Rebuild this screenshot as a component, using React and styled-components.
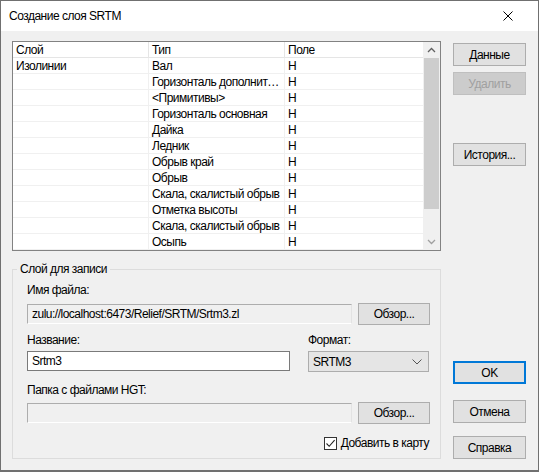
import React from "react";
import styled, { createGlobalStyle } from "styled-components";

const Global = createGlobalStyle`
  html, body {
    margin: 0;
    padding: 0;
    background: #4b5a2c;
  }
  * {
    box-sizing: border-box;
  }
`;

const rows = [
  ["Изолинии", "Вал", "H"],
  ["", "Горизонталь дополнительная", "H"],
  ["", "<Примитивы>", "H"],
  ["", "Горизонталь основная", "H"],
  ["", "Дайка", "H"],
  ["", "Ледник", "H"],
  ["", "Обрыв край", "H"],
  ["", "Обрыв", "H"],
  ["", "Скала, скалистый обрыв", "H"],
  ["", "Отметка высоты", "H"],
  ["", "Скала, скалистый обрыв", "H"],
  ["", "Осыпь", "H"],
];

const App = () => {
  return (
    <Window>
      <Global />
      <TitleBar>
        <span>Создание слоя SRTM</span>
        <CloseIcon viewBox="0 0 10 10">
          <path d="M0.5 0.5 L9.5 9.5 M9.5 0.5 L0.5 9.5" stroke="#000" strokeWidth="1" />
        </CloseIcon>
      </TitleBar>

      <Body>
        <LeftColumn>
          <ListView>
            <Grid>
              <HeaderRow>
                <HeadCell>Слой</HeadCell>
                <HeadCell>Тип</HeadCell>
                <HeadCell>Поле</HeadCell>
              </HeaderRow>
              {rows.map((r, i) => (
                <Row key={i}>
                  <Cell>{r[0]}</Cell>
                  <Cell>{r[1]}</Cell>
                  <Cell>{r[2]}</Cell>
                </Row>
              ))}
            </Grid>
            <ScrollBar>
              <Arrow>
                <svg width="9" height="6" viewBox="0 0 9 6">
                  <path d="M1 5 L4.5 1.5 L8 5" fill="none" stroke="#606060" strokeWidth="1.3" />
                </svg>
              </Arrow>
              <Track>
                <Thumb />
              </Track>
              <Arrow>
                <svg width="9" height="6" viewBox="0 0 9 6">
                  <path d="M1 1 L4.5 4.5 L8 1" fill="none" stroke="#a0a0a0" strokeWidth="1.3" />
                </svg>
              </Arrow>
            </ScrollBar>
          </ListView>

          <Group>
            <legend>Слой для записи</legend>
            <Label>Имя файла:</Label>
            <FieldRow $after={8}>
              <TextBox $readOnly $width={325}>zulu://localhost:6473/Relief/SRTM/Srtm3.zl</TextBox>
              <Button $width={72} $height={22}>Обзор...</Button>
            </FieldRow>

            <SplitRow>
              <FieldColumn $width={263}>
                <Label $after={4}>Название:</Label>
                <TextBox $width={263}>Srtm3</TextBox>
              </FieldColumn>
              <FieldColumn $width={121}>
                <Label $after={4}>Формат:</Label>
                <Select>
                  <span>SRTM3</span>
                  <svg width="10" height="6" viewBox="0 0 10 6">
                    <path d="M0.5 0.5 L5 5 L9.5 0.5" fill="none" stroke="#555" strokeWidth="1" />
                  </svg>
                </Select>
              </FieldColumn>
            </SplitRow>

            <Label $after={5}>Папка с файлами HGT:</Label>
            <FieldRow $after={12}>
              <TextBox $readOnly $width={325} />
              <Button $width={72} $height={22}>Обзор...</Button>
            </FieldRow>

            <CheckRow>
              <CheckBox>
                <svg width="11" height="11" viewBox="0 0 11 11">
                  <path d="M1.5 5.5 L4.2 8.3 L9.6 2.2" fill="none" stroke="#222" strokeWidth="1.1" />
                </svg>
              </CheckBox>
              <span>Добавить в карту</span>
            </CheckRow>
          </Group>
        </LeftColumn>

        <RightColumn>
          <Button $width={73}>Данные</Button>
          <Button $width={73} $disabled $top={6}>Удалить</Button>
          <Button $width={73} $top={48}>История...</Button>
          <Button $width={73} $default $top={195}>OK</Button>
          <Button $width={73} $top={16}>Отмена</Button>
          <Button $width={73} $top={13}>Справка</Button>
        </RightColumn>
      </Body>
    </Window>
  );
};

export default App;

const Window = styled.div`
  width: 539px;
  height: 472px;
  border: 1px solid #707070;
  border-bottom-width: 2px;
  background: #f0f0f0;
  font-family: "Liberation Sans", Arial, sans-serif;
  font-size: 12px;
  letter-spacing: -0.5px;
  color: #000;
  display: flex;
  flex-direction: column;
  overflow: hidden;
`;

const TitleBar = styled.div`
  height: 30px;
  background: #fff;
  display: flex;
  align-items: center;
  justify-content: space-between;
  padding: 0 25px 0 8px;
  font-size: 12px;
  flex-shrink: 0;
`;

const CloseIcon = styled.svg`
  width: 10px;
  height: 10px;
`;

const Body = styled.div`
  flex: 1;
  display: flex;
  padding: 10px 0 0 11px;
  gap: 12px;
`;

const LeftColumn = styled.div`
  width: 429px;
  display: flex;
  flex-direction: column;
`;

const RightColumn = styled.div`
  display: flex;
  flex-direction: column;
  padding-top: 2px;
`;

const ListView = styled.div`
  height: 210px;
  border: 1px solid #828282;
  background: #fff;
  display: flex;
`;

const Grid = styled.div`
  flex: 1;
  display: flex;
  flex-direction: column;
  overflow: hidden;
`;

const HeaderRow = styled.div`
  display: grid;
  grid-template-columns: 136px 136px 1fr;
  height: 16px;
  border-bottom: 1px solid #e5e5e5;
`;

const HeadCell = styled.div`
  padding: 1px 0 0 3px;
  line-height: 14px;
  border-right: 1px solid #e5e5e5;
  &:last-child {
    border-right: none;
  }
`;

const Row = styled.div`
  display: grid;
  grid-template-columns: 136px 136px 1fr;
  height: 16px;
  border-bottom: 1px solid #f0f0f0;
`;

const Cell = styled.div`
  padding: 1px 1px 0 3px;
  line-height: 14px;
  white-space: nowrap;
  overflow: hidden;
  text-overflow: ellipsis;
  border-right: 1px solid #f0f0f0;
  &:last-child {
    border-right: none;
  }
`;

const ScrollBar = styled.div`
  width: 17px;
  background: #f0f0f0;
  display: flex;
  flex-direction: column;
`;

const Arrow = styled.div`
  height: 16px;
  display: flex;
  align-items: center;
  justify-content: center;
`;

const Track = styled.div`
  flex: 1;
  padding: 0 1px;
`;

const Thumb = styled.div`
  height: 151px;
  background: #cdcdcd;
`;

const Group = styled.fieldset`
  margin: 11px 0 0 0;
  padding: 7px 9px 0 14px;
  height: 197px;
  border: 1px solid #dcdcdc;
  border-radius: 0;
  display: flex;
  flex-direction: column;

  legend {
    padding: 0 3px;
    margin-left: -10px;
    font-size: 12px;
  }
`;

const Label = styled.div`
  line-height: 14px;
  margin-bottom: ${(p) => (p.$after !== undefined ? p.$after : 6)}px;
`;

const FieldRow = styled.div`
  display: flex;
  align-items: center;
  gap: 6px;
  margin-bottom: ${(p) => p.$after}px;
`;

const SplitRow = styled.div`
  display: flex;
  gap: 18px;
  margin-bottom: 11px;
`;

const FieldColumn = styled.div`
  width: ${(p) => p.$width}px;
  display: flex;
  flex-direction: column;
`;

const TextBox = styled.div`
  width: ${(p) => p.$width}px;
  height: 20px;
  padding: 0 4px;
  line-height: 18px;
  white-space: nowrap;
  overflow: hidden;
  background: ${(p) => (p.$readOnly ? "#f0f0f0" : "#fff")};
  border: 1px solid ${(p) => (p.$readOnly ? "#adadad" : "#7a7a7a")};
  ${(p) => (p.$readOnly ? "border-bottom-color: #fff; border-right-color: #e3e3e3;" : "")}
`;

const Select = styled.div`
  height: 21px;
  background: #e5e5e5;
  border: 1px solid #adadad;
  display: flex;
  align-items: center;
  justify-content: space-between;
  padding: 0 6px 0 4px;
`;

const Button = styled.div`
  width: ${(p) => p.$width}px;
  height: ${(p) => p.$height || 23}px;
  margin-top: ${(p) => p.$top || 0}px;
  display: flex;
  align-items: center;
  justify-content: center;
  background: ${(p) => (p.$disabled ? "#cccccc" : "#e1e1e1")};
  border: ${(p) => (p.$default ? "2px solid #0078d7" : "1px solid " + (p.$disabled ? "#bfbfbf" : "#adadad"))};
  color: ${(p) => (p.$disabled ? "#a0a0a0" : "#000")};
  flex-shrink: 0;
`;

const CheckRow = styled.div`
  display: flex;
  align-items: center;
  justify-content: flex-end;
  gap: 4px;
  padding-right: 2px;
`;

const CheckBox = styled.div`
  width: 13px;
  height: 13px;
  border: 1px solid #333;
  background: #fff;
  display: flex;
  align-items: center;
  justify-content: center;
`;
